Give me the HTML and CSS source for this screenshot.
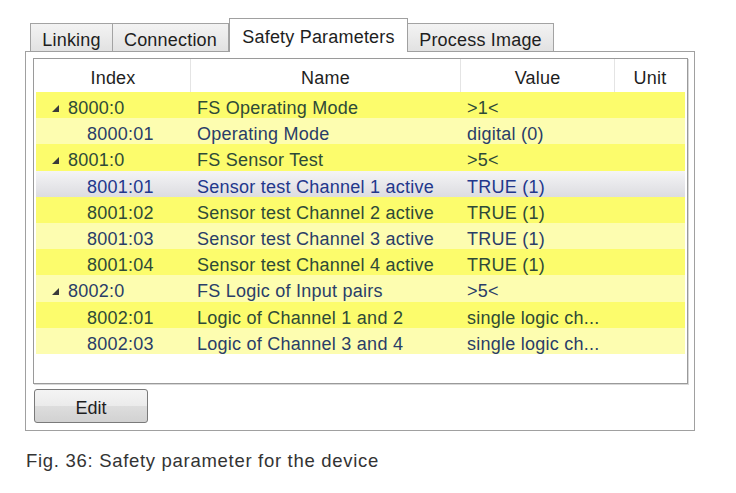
FILE: index.html
```html
<!DOCTYPE html>
<html>
<head>
<meta charset="utf-8">
<link rel="stylesheet" href="styles.css">
</head>
<body>
<div class="fig">
  <div class="tabs">
    <div class="tab t-link">Linking</div>
    <div class="tab t-conn">Connection</div>
    <div class="tab t-safe active">Safety Parameters</div>
    <div class="tab t-proc">Process Image</div>
  </div>
  <div class="panel">
    <div class="list">
      <div class="head">
        <div class="c c-idx">Index</div>
        <div class="c c-name">Name</div>
        <div class="c c-val">Value</div>
        <div class="c c-unit">Unit</div>
      </div>
      <div class="rows">
        <div class="row hi grp">
          <div class="c c-idx"><svg class="tri" width="7" height="7" viewBox="0 0 7 7"><polygon points="7,0 7,7 0,7"/></svg><span>8000:0</span></div>
          <div class="c c-name">FS Operating Mode</div>
          <div class="c c-val">&gt;1&lt;</div>
          <div class="c c-unit"></div>
        </div>
        <div class="row lo sub">
          <div class="c c-idx">8000:01</div>
          <div class="c c-name">Operating Mode</div>
          <div class="c c-val">digital (0)</div>
          <div class="c c-unit"></div>
        </div>
        <div class="row hi grp">
          <div class="c c-idx"><svg class="tri" width="7" height="7" viewBox="0 0 7 7"><polygon points="7,0 7,7 0,7"/></svg><span>8001:0</span></div>
          <div class="c c-name">FS Sensor Test</div>
          <div class="c c-val">&gt;5&lt;</div>
          <div class="c c-unit"></div>
        </div>
        <div class="row sel sub">
          <div class="c c-idx">8001:01</div>
          <div class="c c-name">Sensor test Channel 1 active</div>
          <div class="c c-val">TRUE (1)</div>
          <div class="c c-unit"></div>
        </div>
        <div class="row hi sub">
          <div class="c c-idx">8001:02</div>
          <div class="c c-name">Sensor test Channel 2 active</div>
          <div class="c c-val">TRUE (1)</div>
          <div class="c c-unit"></div>
        </div>
        <div class="row lo sub">
          <div class="c c-idx">8001:03</div>
          <div class="c c-name">Sensor test Channel 3 active</div>
          <div class="c c-val">TRUE (1)</div>
          <div class="c c-unit"></div>
        </div>
        <div class="row hi sub">
          <div class="c c-idx">8001:04</div>
          <div class="c c-name">Sensor test Channel 4 active</div>
          <div class="c c-val">TRUE (1)</div>
          <div class="c c-unit"></div>
        </div>
        <div class="row lo grp">
          <div class="c c-idx"><svg class="tri" width="7" height="7" viewBox="0 0 7 7"><polygon points="7,0 7,7 0,7"/></svg><span>8002:0</span></div>
          <div class="c c-name">FS Logic of Input pairs</div>
          <div class="c c-val">&gt;5&lt;</div>
          <div class="c c-unit"></div>
        </div>
        <div class="row hi sub">
          <div class="c c-idx">8002:01</div>
          <div class="c c-name">Logic of Channel 1 and 2</div>
          <div class="c c-val">single logic ch...</div>
          <div class="c c-unit"></div>
        </div>
        <div class="row lo sub">
          <div class="c c-idx">8002:03</div>
          <div class="c c-name">Logic of Channel 3 and 4</div>
          <div class="c c-val">single logic ch...</div>
          <div class="c c-unit"></div>
        </div>
      </div>
    </div>
    <button class="edit">Edit</button>
  </div>
  <p class="caption">Fig. 36: Safety parameter for the device</p>
</div>
</body>
</html>
```
FILE: styles.css
```css
html, body {
  margin: 0;
  padding: 0;
  background: #ffffff;
}
body {
  font-family: "Liberation Sans", Arial, sans-serif;
  color: #1e1e1e;
}
.fig {
  margin: 18px 0 0 25px;
  width: 670px;
}
.tabs {
  display: flex;
  align-items: flex-end;
  padding-left: 5px;
  height: 33px;
}
.tab {
  box-sizing: border-box;
  height: 28px;
  border: 1px solid #a3a3a3;
  border-bottom: none;
  background: linear-gradient(#f3f3f3, #e2e2e2);
  font-size: 18px;
  line-height: 22px;
  letter-spacing: 0.2px;
  padding-top: 5px;
  text-align: center;
  color: #1e1e1e;
  white-space: nowrap;
}
.t-link { width: 83px; }
.t-conn { width: 117px; margin-left: -1px; }
.t-safe { width: 179px; }
.t-proc { width: 147px; margin-left: -1px; }
.tab.active {
  position: relative;
  z-index: 2;
  height: 34px;
  margin-bottom: -1px;
  background: #ffffff;
  padding-top: 7px;
  border-color: #a0a0a0;
}
.panel {
  box-sizing: border-box;
  width: 670px;
  height: 380px;
  border: 1px solid #a0a0a0;
  background: #ffffff;
  padding: 6px 7px 7px 7px;
  display: flex;
  flex-direction: column;
  align-items: flex-start;
}
.list {
  box-sizing: border-box;
  width: 655px;
  height: 326px;
  border: 1px solid #9a9a9a;
  box-shadow: 1px 1px 0 #d8d8d8;
  padding: 0 2px;
  background: #ffffff;
}
.head {
  display: flex;
  height: 33px;
  box-sizing: border-box;
  font-size: 18px;
  line-height: 22px;
  letter-spacing: 0.2px;
  color: #1e1e1e;
}
.head .c {
  text-align: center;
  padding-top: 8px;
  box-sizing: border-box;
  border-right: 1px solid #e4e4e4;
}
.head .c-unit { border-right: none; }
.c-idx { width: 155px; }
.c-name { width: 270px; }
.c-val { width: 154px; }
.c-unit { width: 70px; }
.rows {
  display: flex;
  flex-direction: column;
}
.row {
  display: flex;
  height: 26.2px;
  box-sizing: border-box;
  font-size: 18px;
  line-height: 22px;
  letter-spacing: 0.25px;
  white-space: nowrap;
}
.row .c {
  box-sizing: border-box;
  padding-top: 5px;
  overflow: hidden;
}
.row .c-name, .row .c-val { padding-left: 6px; }
.hi { background: #fcfc6c; color: #2e4a38; }
.lo { background: #fdfdb0; color: #2a3d68; }
.sel { background: linear-gradient(#f4f4f6, #dcdce0); color: #22378c; }
.grp .c-idx {
  display: flex;
  align-items: flex-start;
}
.grp .tri {
  fill: #3a3a3a;
  margin: 8px 9px 0 16px;
  flex: none;
}
.sub .c-idx { padding-left: 51px; }
.edit {
  margin-top: 5px;
  margin-left: 1px;
  width: 114px;
  height: 34px;
  box-sizing: border-box;
  border: 1px solid #7a7a7a;
  border-radius: 3px;
  background: linear-gradient(#f4f4f4 0%, #ebebeb 50%, #dddddd 51%, #d2d2d2 100%);
  font-family: "Liberation Sans", Arial, sans-serif;
  font-size: 18px;
  line-height: 22px;
  padding: 3px 0 0 0;
  color: #1e1e1e;
  text-align: center;
}
.caption {
  margin: 19px 0 0 1px;
  font-size: 18.5px;
  line-height: 22px;
  letter-spacing: 0.7px;
  color: #333333;
}
```
